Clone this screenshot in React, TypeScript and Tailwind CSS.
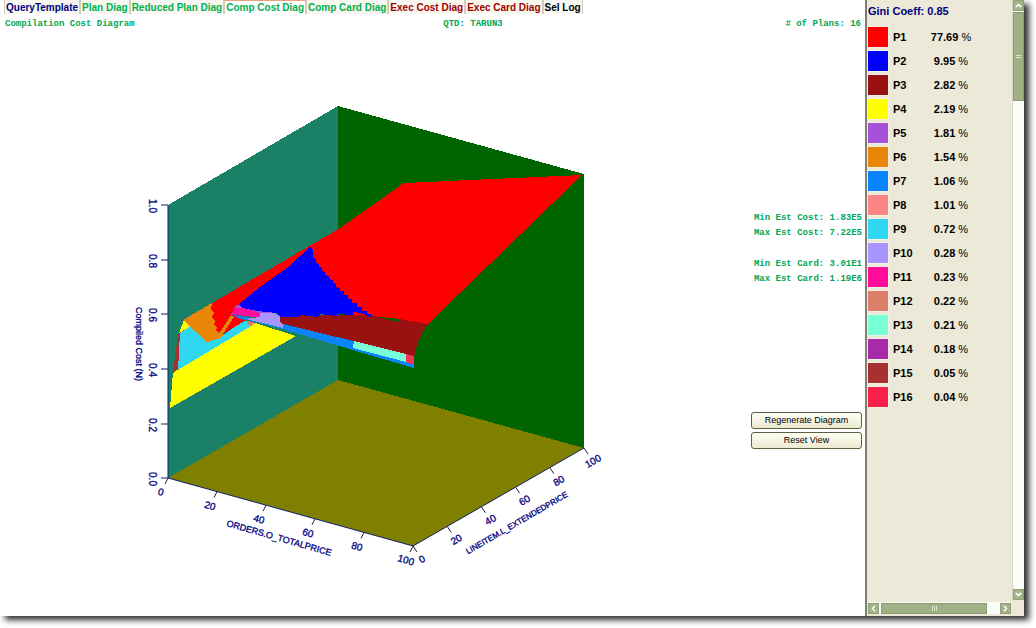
import { useState } from "react";
import { ChevronDown, ChevronLeft, ChevronRight, ChevronUp } from "lucide-react";
import clsx from "clsx";

type Tab = { label: string; color: string };
type Plan = { name: string; color: string; share: string };

const tabs: Tab[] = [
	{ label: "QueryTemplate", color: "text-[#000080]" },
	{ label: "Plan Diag", color: "text-[#00b050]" },
	{ label: "Reduced Plan Diag", color: "text-[#00b050]" },
	{ label: "Comp Cost Diag", color: "text-[#00b050]" },
	{ label: "Comp Card Diag", color: "text-[#00b050]" },
	{ label: "Exec Cost Diag", color: "text-[#a00000]" },
	{ label: "Exec Card Diag", color: "text-[#a00000]" },
	{ label: "Sel Log", color: "text-black" },
];

const plans: Plan[] = [
	{ name: "P1", color: "bg-[#ff0000]", share: "77.69" },
	{ name: "P2", color: "bg-[#0000ff]", share: "9.95" },
	{ name: "P3", color: "bg-[#991111]", share: "2.82" },
	{ name: "P4", color: "bg-[#ffff00]", share: "2.19" },
	{ name: "P5", color: "bg-[#a651d8]", share: "1.81" },
	{ name: "P6", color: "bg-[#e98608]", share: "1.54" },
	{ name: "P7", color: "bg-[#0a84ff]", share: "1.06" },
	{ name: "P8", color: "bg-[#f98585]", share: "1.01" },
	{ name: "P9", color: "bg-[#2fd8f0]", share: "0.72" },
	{ name: "P10", color: "bg-[#a995ff]", share: "0.28" },
	{ name: "P11", color: "bg-[#ff0d9a]", share: "0.23" },
	{ name: "P12", color: "bg-[#dc7f69]", share: "0.22" },
	{ name: "P13", color: "bg-[#78ffd6]", share: "0.21" },
	{ name: "P14", color: "bg-[#a82aa8]", share: "0.18" },
	{ name: "P15", color: "bg-[#a83030]", share: "0.05" },
	{ name: "P16", color: "bg-[#f82048]", share: "0.04" },
];

const stats = [
	["Min Est Cost: 1.83E5", "Max Est Cost: 7.22E5"],
	["Min Est Card: 3.01E1", "Max Est Card: 1.19E6"],
];

// Polygons are painted back to front: walls, floor, then the cost surface.
const faces = [
	{ fill: "#1a8066", points: "168,205 338,106 338,380 168,478" },
	{ fill: "#006400", points: "338,106 584,174 584,448 338,380" },
	{ fill: "#808000", points: "168,478 338,380 584,448 413,546" },
	{ fill: "#ffff00", points: "173,372 255,323 296,336 170,408" },
	{ fill: "#a83030", points: "178,334 181,332 180,368 173,373" },
	{ fill: "#2fd8f0", points: "180,333 190,326 207,342 220,338 243,320 256,323 178,370" },
	{ fill: "#dc7f69", points: "248,321 256,323 251,326 246,323" },
	{ fill: "#ffff00", points: "179,333 184,320 191,326" },
	{ fill: "#e98608", points: "183,320 212,303 218,334 232,313 236,318 221,338 207,342" },
	{
		fill: "#ff0000",
		points:
			"212,303 340,228 404,183 582,175 428,324 400,319 371,316 243,308 233,312 226,323 220,332 216,331 217,328 214,325 215,321 212,317 214,313 211,309",
	},
	{ fill: "#ff0000", points: "234,317 246,320 223,334 228,326" },
	{ fill: "#a651d8", points: "236,305 242,304 276,313 275,317 259,317 233,311" },
	{ fill: "#ff0d9a", points: "234,308 244,308 260,313 259,318 232,314" },
	{ fill: "#a82aa8", points: "232,314 245,318 243,320 231,316" },
	{
		fill: "#0a84ff",
		points: "238,316 283,323 353,340 414,356 414,368 353,350 283,329 236,317",
	},
	{ fill: "#a995ff", points: "260,313 274,313 280,316 280,321 283,324 283,328 246,319 260,317" },
	{
		fill: "#991111",
		points:
			"280,315 371,315 397,322 400,319 428,324 422,333 417,345 414,357 353,341 283,324 280,322",
	},
	{
		fill: "#0000ff",
		points:
			"310,247 313,249 313,258 316,259 316,263 319,264 319,267 322,268 322,271 325,272 325,275 329,276 329,279 333,280 333,283 336,284 336,287 340,288 340,291 344,291 344,295 348,295 348,299 352,299 352,303 357,303 357,307 362,307 362,311 367,311 367,314 371,314 371,317 361,313 353,312 353,315 337,314 337,316 320,314 318,317 300,315 298,317 280,317 277,313 257,311 242,308 239,304 260,287 287,268",
	},
	{ fill: "#78ffd6", points: "354,341 406,354 406,362 353,348" },
	{ fill: "#f83058", points: "406,354 414,356 414,365 406,362" },
];

const costTicks = [
	{ label: "1.0", y: 205 },
	{ label: "0.8", y: 260 },
	{ label: "0.6", y: 314 },
	{ label: "0.4", y: 369 },
	{ label: "0.2", y: 424 },
	{ label: "0.0", y: 478 },
];

const steps = [0, 20, 40, 60, 80, 100];

const labelSizes = {
	tick: "text-[10px]",
	title: "text-[9px]",
	longTitle: "text-[8px]",
};

function AxisLabel({
	angle,
	children,
	size = "tick",
	x,
	y,
}: {
	angle: number;
	children: string;
	size?: keyof typeof labelSizes;
	x: number;
	y: number;
}) {
	return (
		<text
			className={clsx(
				"fill-[#000080] stroke-[#000080] [stroke-width:0.3]",
				labelSizes[size],
			)}
			dominantBaseline="central"
			textAnchor="middle"
			transform={`translate(${x} ${y}) rotate(${angle})`}
		>
			{children}
		</text>
	);
}

function CostDiagram() {
	return (
		<svg
			aria-label="Compilation cost diagram"
			className="h-full min-w-0 flex-1"
			preserveAspectRatio="xMinYMin meet"
			role="img"
			viewBox="0 34 746 582"
		>
			<g shapeRendering="crispEdges">
				{faces.map((face) => (
					<polygon key={face.points} fill={face.fill} points={face.points} />
				))}
			</g>
			<path
				d="M168 205V478L413 546L584 448"
				fill="none"
				stroke="#102070"
			/>
			{costTicks.map((tick) => (
				<g key={tick.label}>
					<path d={`M161 ${tick.y}h7`} stroke="#102070" />
					<AxisLabel angle={90} x={152} y={tick.y + 1}>
						{tick.label}
					</AxisLabel>
				</g>
			))}
			{steps.map((step) => {
				const x = 168 + step * 2.45;
				const y = 478 + step * 0.68;
				return (
					<g key={step}>
						<path d={`M${x} ${y}l-3 6`} stroke="#202040" />
						<AxisLabel angle={16} x={x - 7} y={y + 14}>
							{String(step)}
						</AxisLabel>
					</g>
				);
			})}
			{steps.map((step) => {
				const x = 413 + step * 1.71;
				const y = 546 - step * 0.98;
				return (
					<g key={step}>
						<path d={`M${x} ${y}l4 6`} stroke="#202040" />
						<AxisLabel angle={-30} x={x + 9} y={y + 13}>
							{String(step)}
						</AxisLabel>
					</g>
				);
			})}
			<AxisLabel angle={90} size="title" x={139} y={344}>
				Compiled Cost (N)
			</AxisLabel>
			<AxisLabel angle={16} size="title" x={279} y={538}>
				ORDERS.O_TOTALPRICE
			</AxisLabel>
			<AxisLabel angle={-30} size="longTitle" x={517} y={523}>
				LINEITEM.L_EXTENDEDPRICE
			</AxisLabel>
		</svg>
	);
}

function ActionButton({ children }: { children: string }) {
	return (
		<button
			type="button"
			className="h-[17px] w-full rounded-[3px] border border-[#586040] bg-linear-to-b from-[#fffff6] to-[#ece9d0] text-[9px] leading-[15px] text-black"
		>
			{children}
		</button>
	);
}

const scrollButton =
	"flex size-[11px] shrink-0 items-center justify-center border border-[#8fa077] bg-[#a3b38a] text-white";

function PlanLegend() {
	return (
		<aside className="flex w-[159px] shrink-0 flex-col border-l-2 border-[#81806f] bg-[#ece9d8]">
			<div className="flex min-h-0 flex-1">
				<div className="min-w-0 flex-1 overflow-hidden border-r border-[#dad6c5] pl-px">
					<h2 className="h-[25px] text-[11px] leading-[22px] font-bold text-[#000080]">
						Gini Coeff: 0.85
					</h2>
					<table className="border-collapse text-[11px] leading-6 text-black">
						<tbody>
							{plans.map((plan) => (
								<tr key={plan.name} className="h-6">
									<td className="w-5 p-0">
										<div className={clsx("size-5 outline outline-[#f5f0e4]", plan.color)} />
									</td>
									<th scope="row" className="w-9 p-0 pl-[5px] text-left font-bold">
										{plan.name}
									</th>
									<td className="w-[54px] p-0 text-center">
										<b>{plan.share}</b> %
									</td>
								</tr>
							))}
						</tbody>
					</table>
				</div>
				<div className="flex w-[11px] shrink-0 flex-col bg-[#fbfbf8]">
					<button type="button" aria-label="Scroll up" className={scrollButton}>
						<ChevronUp size={9} strokeWidth={4} />
					</button>
					<div className="mt-px flex h-[89px] flex-col items-center justify-center gap-px border border-[#8b9b70] bg-[#a0b186]">
						<span className="h-px w-[5px] bg-[#dfe6d0]" />
						<span className="h-px w-[5px] bg-[#dfe6d0]" />
					</div>
					<button
						type="button"
						aria-label="Scroll down"
						className={clsx(scrollButton, "mt-auto")}
					>
						<ChevronDown size={9} strokeWidth={4} />
					</button>
				</div>
			</div>
			<div className="flex h-4 shrink-0 items-center pr-[13px] pl-px">
				<div className="flex h-3 flex-1 items-center bg-[#fbfbf8]">
					<button type="button" aria-label="Scroll left" className={scrollButton}>
						<ChevronLeft size={9} strokeWidth={4} />
					</button>
					<div className="ml-0.5 flex h-[11px] w-[106px] items-center justify-center gap-px border border-[#8b9b70] bg-[#a0b186]">
						<span className="h-[5px] w-px bg-[#dfe6d0]" />
						<span className="h-[5px] w-px bg-[#dfe6d0]" />
						<span className="h-[5px] w-px bg-[#dfe6d0]" />
					</div>
					<button
						type="button"
						aria-label="Scroll right"
						className={clsx(scrollButton, "ml-auto")}
					>
						<ChevronRight size={9} strokeWidth={4} />
					</button>
				</div>
			</div>
		</aside>
	);
}

export default function App() {
	const [active, setActive] = useState("Comp Cost Diag");

	return (
		<div className="h-screen overflow-hidden bg-white pr-3 pb-3 font-['Liberation_Sans',Arial,sans-serif]">
			<div className="flex h-full bg-white shadow-[5px_4px_6px_#333333]">
				<main className="flex min-w-0 flex-1 flex-col">
					<div role="tablist" className="flex h-4 shrink-0 pl-1">
						{tabs.map((tab) => (
							<button
								key={tab.label}
								type="button"
								role="tab"
								aria-selected={active === tab.label}
								onClick={() => setActive(tab.label)}
								className={clsx(
									"h-3.5 border-r border-l border-[#d0cdbd] px-px text-[10px] font-bold whitespace-nowrap",
									active === tab.label
										? "border-t border-t-[#e8a080] bg-white leading-3"
										: "bg-[#f8f7f0] leading-4",
									tab.color,
								)}
							>
								{tab.label}
							</button>
						))}
					</div>
					<header className="grid h-[18px] shrink-0 grid-cols-3 pr-1 pl-[5px] font-['Liberation_Mono',monospace] text-[9px] leading-[17px] font-bold text-[#00a651]">
						<h1>Compilation Cost Diagram</h1>
						<span className="pl-20 text-center">QTD: TARUN3</span>
						<span className="text-right"># of Plans: 16</span>
					</header>
					<div className="flex min-h-0 flex-1">
						<CostDiagram />
						<div className="flex w-[119px] shrink-0 flex-col pt-[177px] pr-[3px] pl-[5px]">
							<div className="flex flex-col gap-4 text-right font-['Liberation_Mono',monospace] text-[9px] leading-[15px] font-bold whitespace-nowrap text-[#00a651]">
								{stats.map((group) => (
									<div key={group[0]}>
										{group.map((line) => (
											<p key={line}>{line}</p>
										))}
									</div>
								))}
							</div>
							<div className="mt-[125px] flex flex-col gap-[3px]">
								<ActionButton>Regenerate Diagram</ActionButton>
								<ActionButton>Reset View</ActionButton>
							</div>
						</div>
					</div>
				</main>
				<PlanLegend />
			</div>
		</div>
	);
}
